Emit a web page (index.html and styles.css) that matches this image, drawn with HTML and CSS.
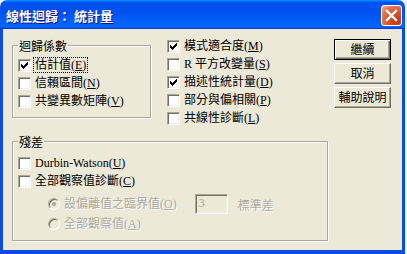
FILE: index.html
```html
<!DOCTYPE html>
<html lang="zh-Hant">
<head>
    <meta charset="UTF-8">
    <title>線性迴歸： 統計量</title>
    <link rel="stylesheet" href="styles.css">
</head>
<body>
    <div class="window">
        <div class="titlebar">
            <span class="title">線性迴歸： 統計量</span>
            <span class="close">
                <svg width="19" height="19" viewBox="0 0 19 19"><path d="M5 5L14 14M14 5L5 14" stroke="#fff" stroke-width="2.4" stroke-linecap="square"/></svg>
            </span>
        </div>
        <div class="frame">
            <div class="top">
                <fieldset class="group group-coef">
                    <legend>迴歸係數</legend>
                    <div class="row"><span class="box checked"></span><span class="label focus">估計值(<u>E</u>)</span></div>
                    <div class="row"><span class="box"></span><span class="label">信賴區間(<u>N</u>)</span></div>
                    <div class="row"><span class="box"></span><span class="label">共變異數矩陣(<u>V</u>)</span></div>
                </fieldset>
                <div class="checks">
                    <div class="row"><span class="box checked"></span><span class="label">模式適合度(<u>M</u>)</span></div>
                    <div class="row"><span class="box"></span><span class="label">R 平方改變量(<u>S</u>)</span></div>
                    <div class="row"><span class="box checked"></span><span class="label">描述性統計量(<u>D</u>)</span></div>
                    <div class="row"><span class="box"></span><span class="label">部分與偏相關(<u>P</u>)</span></div>
                    <div class="row"><span class="box"></span><span class="label">共線性診斷(<u>L</u>)</span></div>
                </div>
                <div class="buttons">
                    <div class="btn default">繼續</div>
                    <div class="btn">取消</div>
                    <div class="btn">輔助說明</div>
                </div>
            </div>
            <fieldset class="group group-resid">
                <legend>殘差</legend>
                <div class="row"><span class="box"></span><span class="label">Durbin-Watson(<u>U</u>)</span></div>
                <div class="row"><span class="box"></span><span class="label">全部觀察值診斷(<u>C</u>)</span></div>
                <div class="radios">
                    <div class="row row-tall">
                        <span class="radio selected"></span>
                        <span class="label disabled">設偏離值之臨界值(<u>O</u>)</span>
                        <span class="field">3</span>
                        <span class="disabled unit">標準差</span>
                    </div>
                    <div class="row row-short">
                        <span class="radio"></span>
                        <span class="label disabled">全部觀察值(<u>A</u>)</span>
                    </div>
                </div>
            </fieldset>
        </div>
    </div>
</body>
</html>
```

FILE: styles.css
```css
/* Windows XP dialog, classic controls */
body {
    margin: 0;
    background: #eef0f4;
    font-family: "Liberation Serif", "Noto Sans CJK TC", serif;
    font-size: 12px;
    color: #000;
}

.window {
    width: 405px;
    height: 254px;
    display: flex;
    flex-direction: column;
}

.titlebar {
    height: 29px;
    flex: none;
    box-sizing: border-box;
    display: flex;
    align-items: center;
    padding: 1px 3px 0 6px;
    border-radius: 7px 7px 0 0;
    background: linear-gradient(180deg, #0997ff 0%, #0053ee 8%, #0050ee 40%, #0066ff 88%, #0066ff 93%, #005bff 95%, #003dd7 96%, #003dd7 100%);
}

.title {
    flex: 1;
    color: #fff;
    font: bold 13px "Noto Sans CJK TC", sans-serif;
    text-shadow: 1px 1px #0f1089;
}

.close {
    width: 21px;
    height: 21px;
    box-sizing: border-box;
    border: 1px solid #fff;
    border-radius: 3px;
    background: radial-gradient(circle at 80% 80%, #c1360d 0%, #d8572c 45%, #e57b58 75%, #f4b9a2 100%);
    display: flex;
    align-items: center;
    justify-content: center;
}

.frame {
    flex: 1;
    background: #ece9d8;
    border: 3px solid #0a4be0;
    border-top: 0;
    border-bottom-width: 4px;
    padding: 8px 11px 0 9px;
}

.top {
    display: flex;
    align-items: flex-start;
    height: 90px;
}

/* group boxes */
.group {
    margin: 0;
    box-sizing: border-box;
    border: 1px solid #aca899;
    box-shadow: 1px 1px #fff, inset 1px 1px #fff;
    min-width: 0;
}

.group legend {
    padding: 0 1px;
    line-height: 13px;
    font-family: "Noto Sans CJK TC", sans-serif;
    background: #ece9d8;
}

.group-coef {
    width: 139px;
    margin-top: 2px;
    padding: 4px 5px 7px 5px;
}

.group-resid {
    width: 316px;
    margin-top: 8px;
    padding: 6px 5px 8px 5px;
}

.row {
    display: flex;
    align-items: center;
    height: 18px;
    white-space: nowrap;
}

.label {
    margin-left: 3px;
    padding: 0 1px;
    line-height: 14px;
}

.label.focus {
    outline: 1px dotted #000;
}

.checks {
    margin-left: 16px;
}

/* check box */
.box {
    width: 13px;
    height: 13px;
    flex: none;
    box-sizing: border-box;
    border: 1px solid;
    border-color: #aca899 #fff #fff #aca899;
    box-shadow: inset 1px 1px #716f64, inset -1px -1px #f1efe2;
    background: #fff;
}

.box.checked {
    background: #fff url("data:image/svg+xml;utf8,<svg xmlns='http://www.w3.org/2000/svg' width='7' height='7' shape-rendering='crispEdges'><path d='M0 2h1v3H0zM1 3h1v3H1zM2 4h1v3H2zM3 3h1v3H3zM4 2h1v3H4zM5 1h1v3H5zM6 0h1v3H6z' fill='%23000'/></svg>") no-repeat 2px 2px;
}

/* radios */
.radios {
    margin-top: 3px;
    padding-left: 30px;
}

.row-tall {
    height: 22px;
}

.row-short {
    height: 17px;
}

.radio {
    width: 12px;
    height: 12px;
    flex: none;
    box-sizing: border-box;
    border-radius: 50%;
    border: 1px solid;
    border-color: #aca899 #fff #fff #aca899;
    box-shadow: inset 1px 1px #716f64;
    background: #ece9d8;
    display: flex;
    align-items: center;
    justify-content: center;
}

.radio.selected::after {
    content: "";
    width: 4px;
    height: 4px;
    border-radius: 50%;
    background: #aca899;
}

.disabled {
    color: #aca899;
    text-shadow: 1px 1px #fff;
}

.field {
    width: 33px;
    height: 20px;
    box-sizing: border-box;
    margin-left: 17px;
    padding-left: 3px;
    border: 1px solid;
    border-color: #aca899 #fff #fff #aca899;
    box-shadow: inset 1px 1px #716f64, inset -1px -1px #f1efe2;
    color: #aca899;
    line-height: 17px;
}

.unit {
    margin-left: 10px;
    font-family: "Noto Sans CJK TC", sans-serif;
}

/* push buttons */
.buttons {
    margin-left: auto;
    margin-top: 2px;
    display: flex;
    flex-direction: column;
    gap: 3px;
}

.btn {
    width: 57px;
    height: 21px;
    box-sizing: border-box;
    border: 1px solid;
    border-color: #fff #716f64 #716f64 #fff;
    box-shadow: inset -1px -1px #aca899;
    font-family: "Noto Sans CJK TC", sans-serif;
    line-height: 18px;
    text-align: center;
}

.btn.default {
    border: 1px solid #000;
    box-shadow: inset 1px 1px #fff, inset -1px -1px #716f64, inset -2px -2px #aca899;
}
```
